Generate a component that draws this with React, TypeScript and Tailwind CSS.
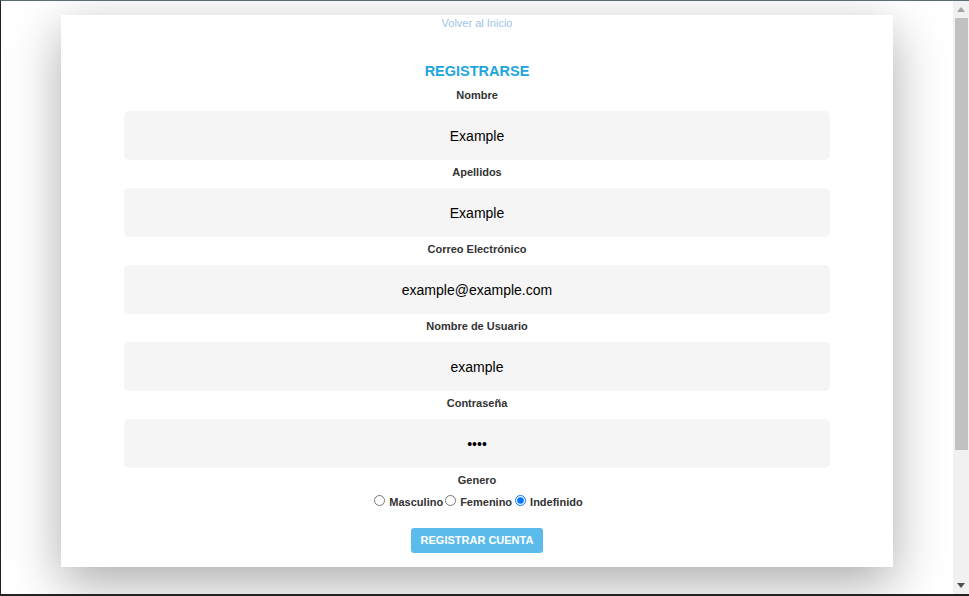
import React from 'react'

const fields = [
  { label: 'Nombre', value: 'Example', type: 'text' },
  { label: 'Apellidos', value: 'Example', type: 'text' },
  { label: 'Correo Electrónico', value: 'example@example.com', type: 'text' },
  { label: 'Nombre de Usuario', value: 'example', type: 'text' },
  { label: 'Contraseña', value: '1234', type: 'password' },
]

export default function App() {
  return (
    <div
      className="w-[969px] h-[596px] overflow-hidden flex border-t border-t-[#5f6b73] border-l border-l-[#222] border-b-2 border-b-[#222] bg-white"
      style={{ fontFamily: '"Liberation Sans", Arial, sans-serif' }}
    >
      {/* Page */}
      <div className="flex-1 pt-[14px] px-[60px]">
        <div className="bg-white h-[552px] shadow-[0_16px_48px_rgba(0,0,0,0.33)] flex flex-col items-center">
          <a className="mt-[2px] text-[11px] leading-[13px] text-[#9cc3e6]">Volver al Inicio</a>

          <h1 className="mt-[32px] text-[14.5px] leading-[18px] font-bold text-[#1ea5dd]">REGISTRARSE</h1>

          {fields.map((f, i) => (
            <div key={f.label} className={`flex flex-col items-center ${i === 0 ? 'mt-[9px]' : 'mt-[6px]'}`}>
              <label className="text-[11px] leading-[12px] font-bold text-[#333]">{f.label}</label>
              <input
                type={f.type}
                readOnly
                defaultValue={f.value}
                className="mt-[10px] w-[706px] h-[49px] rounded-[5px] bg-[#f5f5f5] text-center text-[14px] text-black outline-none"
              />
            </div>
          ))}

          <div className="mt-[6px] text-[11px] leading-[12px] font-bold text-[#333]">Genero</div>
          <div className="mt-[9px] flex items-center text-[11px] leading-[14px] font-bold text-[#333]">
            <label className="flex items-center">
              <input type="radio" name="genero" className="w-[11px] h-[11px] mr-[4px] ml-[3px] mb-[3px]" />
              Masculino
            </label>
            <label className="flex items-center">
              <input type="radio" name="genero" className="w-[11px] h-[11px] mr-[4px] ml-[2px] mb-[3px]" />
              Femenino
            </label>
            <label className="flex items-center">
              <input type="radio" name="genero" defaultChecked className="w-[11px] h-[11px] mr-[4px] ml-[3px] mb-[3px]" />
              Indefinido
            </label>
          </div>

          <button className="mt-[19px] w-[132px] h-[25px] rounded-[3px] bg-[#5bbcec] text-white text-[11px] font-bold">
            REGISTRAR CUENTA
          </button>
        </div>
      </div>

      {/* Scrollbar */}
      <div className="w-[16px] h-full bg-[#f1f1f1] flex flex-col items-center">
        <div className="h-[17px] flex items-center justify-center">
          <svg width="8" height="5" viewBox="0 0 8 5"><path d="M4 0L8 5H0Z" fill="#a3a3a3" /></svg>
        </div>
        <div className="w-[13px] h-[432px] ml-[1px] bg-[#c1c1c1]" />
        <div className="flex-1" />
        <div className="h-[17px] flex items-center justify-center">
          <svg width="8" height="5" viewBox="0 0 8 5"><path d="M0 0H8L4 5Z" fill="#505050" /></svg>
        </div>
      </div>
    </div>
  )
}
